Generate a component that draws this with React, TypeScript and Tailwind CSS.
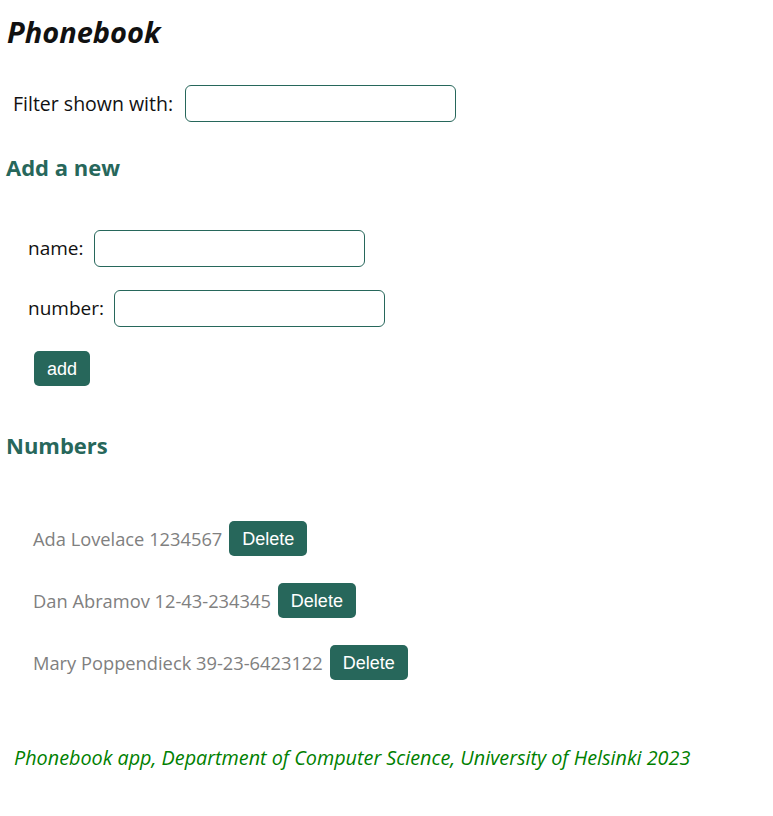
import { useState } from "react"

const persons = [
  { id: 1, name: "Ada Lovelace", number: "1234567" },
  { id: 2, name: "Dan Abramov", number: "12-43-234345" },
  { id: 3, name: "Mary Poppendieck", number: "39-23-6423122" },
]

const inputCls = "w-[271px] h-[37px] border border-[#27675b] rounded-[6px] bg-white px-2 outline-none"
const btnCls = "bg-[#27675b] text-white text-[18px] font-['Liberation_Sans',Arial,sans-serif] rounded-[5px] px-[13px] h-[35px] leading-[36px]"

export default function App() {
  const [filter, setFilter] = useState("")
  const [name, setName] = useState("")
  const [number, setNumber] = useState("")

  const shown = persons.filter(p => p.name.toLowerCase().includes(filter.toLowerCase()))

  return (
    <div className="min-h-[816px] bg-white text-[#111] font-['Open_Sans',sans-serif] text-[19px]">
      <h1 className="pt-[14px] pl-[7px] h-[50px] leading-[36px] text-[29px] font-bold italic text-[#111]">Phonebook</h1>

      <div className="mt-[35px] pl-[13px] flex items-center gap-[12px] text-[19.5px]">
        <span>Filter shown with:</span>
        <input className={inputCls + " h-[36px]"} value={filter} onChange={e => setFilter(e.target.value)} />
      </div>

      <h3 className="mt-[32px] pl-[6px] h-[26px] leading-[26px] text-[22px] font-bold text-[#27675b]">Add a new</h3>

      <form onSubmit={e => e.preventDefault()} className="mt-[50px] pl-[28px] flex flex-col">
        <div className="flex items-center gap-[11px]">
          <span>name:</span>
          <input className={inputCls} value={name} onChange={e => setName(e.target.value)} />
        </div>
        <div className="mt-[23px] flex items-center gap-[10px]">
          <span>number:</span>
          <input className={inputCls} value={number} onChange={e => setNumber(e.target.value)} />
        </div>
        <div className="mt-[24px] pl-[6px]">
          <button type="submit" className={btnCls + " h-[34px] leading-[35px]"}>add</button>
        </div>
      </form>

      <h3 className="mt-[46px] pl-[6px] h-[26px] leading-[26px] text-[22px] font-bold text-[#27675b]">Numbers</h3>

      <ul className="mt-[63px] pl-[33px] flex flex-col gap-[27px] text-[#808080] text-[18.3px]">
        {shown.map(p => (
          <li key={p.id} className="flex items-center gap-[7px]">
            <span>{p.name} {p.number}</span>
            <button className={btnCls}>Delete</button>
          </li>
        ))}
      </ul>

      <div className="mt-[63px] pl-[14px] italic text-[#008000] text-[19.8px]">
        Phonebook app, Department of Computer Science, University of Helsinki 2023
      </div>
    </div>
  )
}
